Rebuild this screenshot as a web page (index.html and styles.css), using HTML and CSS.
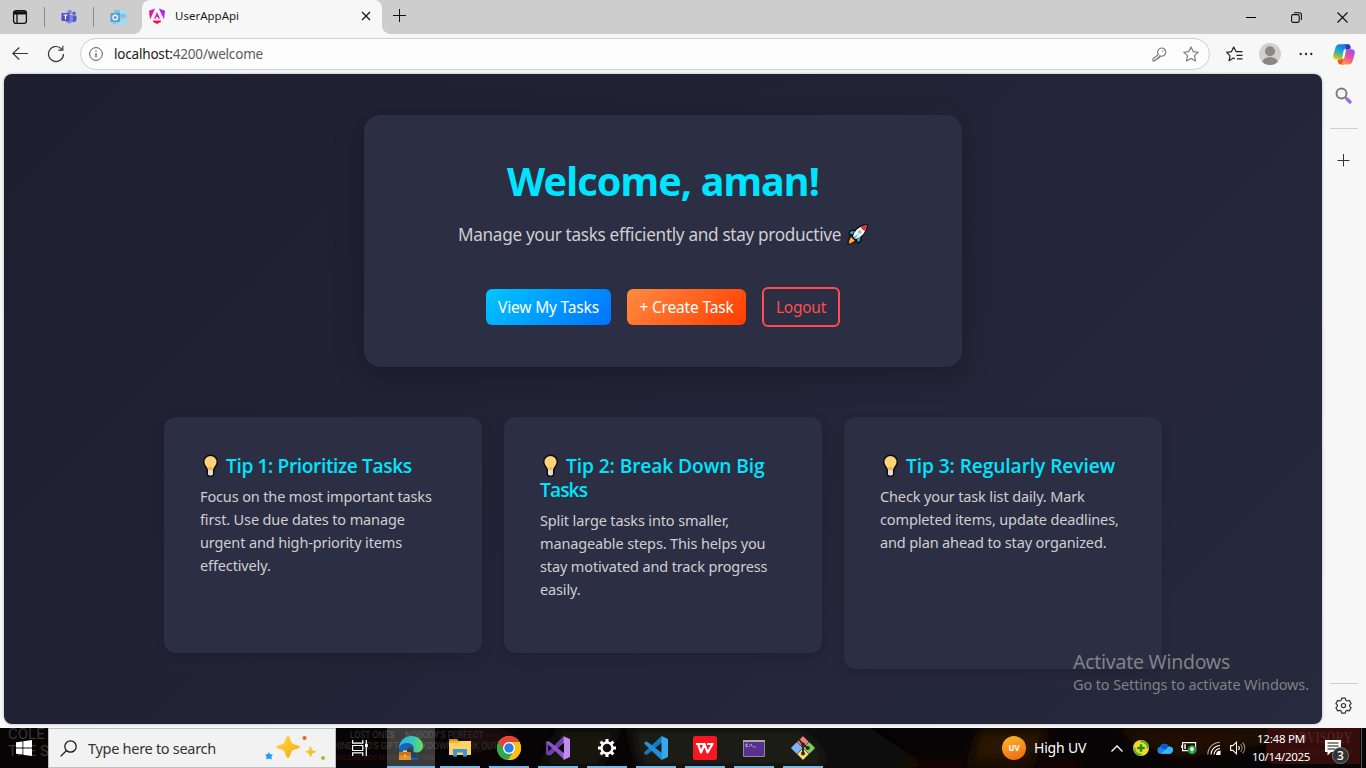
FILE: index.html
```html
<!DOCTYPE html>
<html lang="en">
<head>
<meta charset="utf-8">
<title>UserAppApi</title>
<link rel="stylesheet" href="styles.css">
</head>
<body>
<div class="desktop">
  <header class="tabstrip">
    <div class="tab-cell cell-menu"><svg width="16" height="16" viewBox="0 0 16 16" fill="none" stroke="#111" stroke-width="1.3"><rect x="1.6" y="1.6" width="12.8" height="12.8" rx="2.4"/><path d="M2 3.2h12M2 4.6h12" stroke-width="2"/><path d="M5 5v9"/></svg></div>
    <i class="tab-sep"></i>
    <div class="tab-cell"><svg width="16" height="16" viewBox="0 0 16 16"><circle cx="13" cy="4.3" r="1.8" fill="#5b62c8"/><circle cx="8.6" cy="3" r="2.3" fill="#7b83eb"/><path d="M10 6.500h5.500v4a3 3 0 0 1-4 2.500z" fill="#5059c9"/><path d="M5 6h7v5a4 4 0 0 1-7 2z" fill="#7b83eb"/><rect x=".5" y="4" width="8" height="8" rx=".8" fill="#4b53bc"/><path d="M2.500 6h4M4.500 6v4.500" stroke="#fff" stroke-width="1.200"/></svg></div>
    <i class="tab-sep"></i>
    <div class="tab-cell"><svg width="17" height="17" viewBox="0 0 17 17"><path d="M4 .8h12v8H4z" fill="#7cc4e6"/><path d="M10 .8h6v4h-6z" fill="#a4dcf2"/><path d="M3 8l7 3 6.500-4v9H3z" fill="#84c5e4"/><path d="M3 16l13.500-8v8z" fill="#a3d8f0"/><rect x=".5" y="4" width="9.500" height="9" rx=".7" fill="#5a9fce"/><circle cx="5.200" cy="8.500" r="2.300" fill="none" stroke="#edf6fb" stroke-width="1.400"/></svg></div>
    <div class="tab">
      <svg width="16" height="16" viewBox="0 0 16 16"><defs><linearGradient id="ng" x1="0" x2="1" y1=".7" y2="0"><stop offset="0" stop-color="#f11272"/><stop offset=".55" stop-color="#d622dc"/><stop offset="1" stop-color="#7d2af5"/></linearGradient></defs><path d="M6.200.4L0 2.700l1 8.800zM9.800.4L16 2.700l-1 8.800z" fill="url(#ng)"/><path d="M8 4l3 6.700H9.400L8.800 9H7.200l-.6 1.700H5z" fill="#e21cb4"/><path d="M4.300 12.500h7.400l.5 1.300L8 16l-4.200-2.200z" fill="#f5104e"/></svg>
      <span class="tab-title">UserAppApi</span>
      <svg class="tab-close" width="10" height="10" viewBox="0 0 10 10"><path d="M1 1l8 8M9 1L1 9" stroke="#111" stroke-width="1.200"/></svg>
    </div>
    <svg class="new-tab" width="14" height="14" viewBox="0 0 14 14"><path d="M6.500 0v13M0 6.500h13" stroke="#111"/></svg>
    <div class="win-controls">
      <svg width="10" height="10" viewBox="0 0 10 10"><path d="M0 5.500h10" stroke="#000"/></svg>
      <svg width="11" height="11" viewBox="0 0 11 11" fill="none" stroke="#111" stroke-width="1.100"><rect x=".6" y="2.600" width="7.600" height="7.800" rx="1.500"/><path d="M3 .7h5.200a2.200 2.200 0 0 1 2.200 2.200v5"/></svg>
      <svg width="11" height="11" viewBox="0 0 11 11"><path d="M.5.5l10 10M10.500.5l-10 10" stroke="#111" stroke-width="1.200"/></svg>
    </div>
  </header>

  <nav class="toolbar">
    <svg class="ic-back" width="16" height="14" viewBox="0 0 16 14" fill="none" stroke="#333" stroke-width="1.100"><path d="M7.300.5L.8 6.500l6.500 6M1 6.500h15"/></svg>
    <svg class="ic-reload" width="18" height="18" viewBox="0 0 18 18" fill="none" stroke="#333" stroke-width="1.200"><path d="M16.500 9A7.500 7.500 0 1 1 14.600 4M15.800.8v4.400h-4.400"/></svg>
    <div class="address">
      <svg width="14" height="14" viewBox="0 0 14 14" fill="none" stroke="#555"><circle cx="7" cy="7" r="6.400"/><path d="M7 6.200v4M7 3.600v1.200" stroke-width="1.300"/></svg>
      <span class="url">localhost:<em>4200/welcome</em></span>
      <svg class="ic-key" width="15" height="15" viewBox="0 0 15 15" fill="none" stroke="#777" stroke-width="1.100"><path d="M6.200 7.200A4.100 4.100 0 1 1 8.800 9.100L7.600 8.900v1.500H6v1.500H4.500l-1.800 2H1v-2.100l5.400-4.300z"/><circle cx="10.800" cy="4" r=".7" fill="#777" stroke="none"/></svg>
      <svg width="16" height="16" viewBox="0 0 16 16" fill="none" stroke="#777" stroke-width="1.100" stroke-linejoin="round"><path d="M8 .9l2.200 4.700 5.100.6-3.800 3.500 1 5.200L8 12.400l-4.500 2.500 1-5.200L.7 6.200l5.100-.6z"/></svg>
    </div>
    <svg class="ic-fav" width="17" height="16" viewBox="0 0 17 16" fill="none" stroke="#222" stroke-width="1.200" stroke-linejoin="round"><path d="M8.800 12.800L7.300 12l-4.200 2.700.9-4.900L.7 6.300l4.800-.7L7.700 1 10 5.600h6.500M10.500 9.300h6M11 12.800h5.500"/></svg>
    <svg class="ic-user" width="22" height="22" viewBox="0 0 22 22"><defs><clipPath id="uc"><circle cx="11" cy="11" r="11"/></clipPath></defs><g clip-path="url(#uc)"><path d="M0 0h22v22H0z" fill="#d2d0ce"/><circle cx="11" cy="8.300" r="5" fill="#8a8886"/><ellipse cx="11" cy="20" rx="8" ry="6" fill="#8a8886"/></g></svg>
    <svg class="ic-more" width="14" height="4" viewBox="0 0 14 4" fill="#222"><circle cx="1.700" cy="2" r="1.150"/><circle cx="7" cy="2" r="1.150"/><circle cx="12.300" cy="2" r="1.150"/></svg>
    <svg class="ic-copilot" width="22" height="21" viewBox="0 0 22 21"><defs><linearGradient id="cp1" x1=".6" y1="0" x2=".3" y2="1"><stop offset="0" stop-color="#1677d8"/><stop offset=".4" stop-color="#18a5e5"/><stop offset=".7" stop-color="#6cbf55"/><stop offset="1" stop-color="#f6c51a"/></linearGradient><linearGradient id="cp2" x1=".7" y1="0" x2=".3" y2="1"><stop offset="0" stop-color="#a24df0"/><stop offset=".5" stop-color="#e8509d"/><stop offset="1" stop-color="#ff9a4a"/></linearGradient></defs><path d="M11 .3h4.500c1.500 0 1.900 1.900 2.400 4.200l-5 1.500z" fill="#1c3fc0"/><path d="M11 20.500H7.500c-2 0-2.500-2-3-4.500l5.500-2z" fill="#e8572c"/><path d="M6.500.3h7.300c-2 1.500-3.200 12-4.500 14.200-.5 1-1.500 1-2.800 1H3.300C.5 15.500-.3 13.300.4 10.500L2.500 3.600C3.200 1.500 4.500.3 6.500.3z" fill="url(#cp1)"/><path d="M15.500 20.500H8.200c2-1.500 3.200-12 4.500-14.200.5-1 1.500-1 2.800-1h3.200c2.800 0 3.600 2.200 2.900 5l-2.100 6.900c-.7 2.100-2 3.300-4 3.300z" fill="url(#cp2)"/><path d="M10.800 6h2.300L11.200 14.500H9z" fill="#fff"/></svg>
  </nav>

  <div class="middle">
    <main class="page">
      <section class="hero">
        <h1>Welcome, aman!</h1>
        <p class="lead"><span>Manage your tasks efficiently and stay productive</span>
          <svg class="rocket" width="21" height="21" viewBox="0 0 21 21"><path d="M20.300.6c-5-.1-9 1.800-12 5.200L3.500 6.500 1.300 10l2.300.6L1 17.500l-.3 2.800 3.300-.4 6-2.600.7 2.400 3.400-2 .5-5.200c4-3.300 5.800-7.200 5.700-11.900z" fill="#111" stroke="#111" stroke-width="1"/><path d="M7.600 7L4 7.600 2.600 9.500l3 .8zM13.500 13l-.7 4-2 1-.8-2.900z" fill="#1fb4f0"/><path d="M19.500 1.300c-5 .3-9 3-12 7.200L6 12.300 8.600 15l3.700-1.500c4.300-3 7-7 7.200-12.200z" fill="#fff"/><path d="M19.500 1.300c-2 .1-4 .7-5.600 1.700.5 2 1.800 3.300 3.900 3.900 1-1.700 1.600-3.500 1.700-5.600z" fill="#e32b43"/><circle cx="12.800" cy="8" r="2" fill="#b6b9be"/><path d="M6.500 12.500l2 2L12 10z" fill="#4ec9f5"/><path d="M4 12.800l4 4-3.800 2.400-2.600.4.500-3z" fill="#ff8a1e"/><path d="M4 14l2.500 2.500-3 1.400z" fill="#ffd04a"/></svg></p>
        <div class="actions">
          <button class="btn btn-view">View My Tasks</button>
          <button class="btn btn-create">+ Create Task</button>
          <button class="btn btn-logout">Logout</button>
        </div>
      </section>
      <section class="tips">
        <article class="tip">
          <h2 class="tight"><svg class="bulb"><use href="#bulb"/></svg>Tip 1: Prioritize Tasks</h2>
          <p>Focus on the most important tasks<br>first. Use due dates to manage<br>urgent and high-priority items<br>effectively.</p>
        </article>
        <article class="tip">
          <h2><svg class="bulb"><use href="#bulb"/></svg>Tip 2: Break Down Big<br><span class="tighter">Tasks</span></h2>
          <p>Split large tasks into smaller,<br>manageable steps. This helps you<br>stay motivated and track progress<br>easily.</p>
        </article>
        <article class="tip tip-tall">
          <h2><svg class="bulb"><use href="#bulb"/></svg>Tip 3: Regularly Review</h2>
          <p>Check your task list daily. Mark<br>completed items, update deadlines,<br>and plan ahead to stay organized.</p>
        </article>
      </section>
    </main>
    <aside class="sidebar">
      <svg width="17" height="17" viewBox="0 0 17 17" fill="none"><circle cx="6.500" cy="6.500" r="5" stroke="#7a7a7a" stroke-width="1.900"/><path d="M10 10l2.500 2.500" stroke="#7a7a7a" stroke-width="1.600"/><path d="M12 12l3 3" stroke="#9a6ad8" stroke-width="3.200" stroke-linecap="round"/></svg>
      <hr>
      <svg class="side-plus" width="13" height="13" viewBox="0 0 13 13"><path d="M6.500 0v12.500M.5 6.500H12.500" stroke="#333"/></svg>
      <hr class="hr-bottom">
      <svg class="side-gear" width="17" height="17" viewBox="0 0 17 17" fill="none" stroke="#333" stroke-width="1.200" stroke-linejoin="round"><path d="M6.700 1.200h3.600l.6 2.100 1.200.7 2.200-.6 1.800 3.100-1.500 1.600v1.100l1.500 1.600-1.800 3.100-2.200-.6-1.200.7-.6 2.100H6.700L6.100 14l-1.200-.7-2.200.6L.9 10.800l1.500-1.600V8.100L.9 6.500l1.800-3.100L4.900 4l1.200-.7z"/><circle cx="8.500" cy="8.600" r="2.100"/></svg>
    </aside>
  </div>

  <div class="watermark"><div class="wm-title">Activate Windows</div><div>Go to Settings to activate Windows.</div></div>

  <footer class="taskbar">
    <svg class="wallpaper" width="1366" height="40" viewBox="0 0 1366 40"><defs><filter id="soft"><feGaussianBlur stdDeviation="6"/></filter></defs>
      <path d="M0 0h1366v40H0z" fill="#060404"/>
      <g filter="url(#soft)"><path d="M500 0l30 14-60 12-20-26z" fill="#1d0c08"/><path d="M560 0h60l-20 40h-60z" fill="#19150a"/><path d="M630 0h180l20 40H640z" fill="#1c1a18"/><path d="M800 0h70l60 40h-90z" fill="#100b07"/><path d="M980 2h70l-20 30h-60z" fill="#2a1305"/><path d="M1115 0h160l-10 16-80 14-50-14z" fill="#241003"/><path d="M900 34h180v6H900z" fill="#260903"/></g>
      <path d="M1267 0h93v36h-84q-10 0-10-10z" fill="#340c0b"/>
      <g class="wall-text"><text x="8" y="11" class="wt-big">COLE</text><text x="8" y="28" class="wt-big">THE S</text><text x="350" y="10">LOST ONES</text><text x="405" y="10">NOBODY'S PERFECT</text><text x="333" y="21">HINE GOD'S GIFT BREAKDOWN WORK OUT</text><text x="334" y="32" class="wt-red">DUCERS: ROC NATION AND THE</text><text x="1290" y="15" class="wt-adv" textLength="62" lengthAdjust="spacingAndGlyphs">ADVISORY</text><text x="1290" y="27" class="wt-adv2" textLength="62" lengthAdjust="spacingAndGlyphs">EXPLICIT CONTENT</text></g></svg>
    <div class="start"><svg width="16" height="16" viewBox="0 0 16 16" fill="#fff"><path d="M0 2.300l6.500-.9v6.200H0zM7.300 1.300L16 0v7.600H7.300zM0 8.400h6.500v6.200L0 13.700zM7.300 8.400H16V16l-8.700-1.300z"/></svg></div>
    <div class="search">
      <svg width="17" height="17" viewBox="0 0 17 17" fill="none" stroke="#111" stroke-width="1.200"><circle cx="10.500" cy="6.500" r="5.700"/><path d="M6.500 10.500L.6 16.400"/></svg>
      <span class="search-text">Type here to search</span>
      <svg class="sparkles" width="62" height="26" viewBox="0 0 62 26"><defs><linearGradient id="sp" x1="0" y1="0" x2="1" y2="1"><stop offset="0" stop-color="#ffd84a"/><stop offset="1" stop-color="#f5a80c"/></linearGradient></defs><path d="M24 1c2.200 0 2.500 6 4.500 7.500s7.500 2 7.500 3.500-5.500 2-7.500 3.500-2.300 7.500-4.500 7.500-2.500-6-4.500-7.500S12 13.500 12 12s5.500-2 7.500-3.500S21.800 1 24 1z" fill="url(#sp)"/><path d="M46.500 11c1 0 1 3.500 2 4.200s3.500.6 3.500 1.500-2.500.9-3.500 1.600-1 3.700-2 3.700-1-3-2-3.700-3.500-.7-3.500-1.600 2.500-.8 3.500-1.500 1-4.200 2-4.200z" fill="url(#sp)"/><path d="M4.800 17l1.300 2.300 2.900.2-1.700 2.200.6 2.800-3-1.100-2.700 1 .3-2.800L1 19.500l2.600-.3z" fill="#1a9ff0"/><circle cx="40.500" cy="3" r="2.100" fill="#f2602c"/><circle cx="59" cy="23" r="2.100" fill="#8fcb3c"/></svg>
    </div>
    <div class="task-view"><svg width="17" height="16" viewBox="0 0 17 16" fill="none" stroke="#fff" stroke-width="1.200"><path d="M.6 0v3.200h10.200V0M.6 16v-3.200h10.200V16M.6 5.500h10.200v5H.6zM14.300 0v4M14.300 7v9"/><path d="M13 4h2.800v3H13z" fill="#fff" stroke="none"/></svg></div>
    <div class="apps">
      <div class="app active"><svg width="24" height="24" viewBox="0 0 24 24"><defs><linearGradient id="e1" x1="0" y1=".3" x2="1" y2=".3"><stop offset="0" stop-color="#2fb0ee"/><stop offset=".6" stop-color="#35c7b4"/><stop offset="1" stop-color="#6be05a"/></linearGradient></defs><path d="M0 11C1 4 6 0 12.500 0 19 0 24 4.500 24 10c0 4-3 6.500-6.500 6.500-3 0-4-1.500-3-3 1-3-1-5.500-5-5.500C5 8 1 9 0 14z" fill="url(#e1)"/><path d="M0 13c.5-4 4.500-6.500 9-6 3 .3 5 2.500 5 4.500-3-1.500-6 .5-6 4 0 4 3.500 6.500 8 6.500 2 0 4-.6 5.500-1.500-2 2.500-5 3.500-9 3.500C5 24 0 19 0 13z" fill="#1464b8"/><path d="M8 15c0 4.500 4 7 8.500 7 2 0 4-.5 5.500-2-3 1-8 .5-10-3.500z" fill="#0b4690"/><path d="M0 16h12v8H0z" fill="#e5962a"/><path d="M0 16h12v3.500H0z" fill="#c77413"/><path d="M4 16v-1.500h4V16M5.200 18.500h1.600v2.300H5.200z" fill="#ffd273"/></svg></div>
      <div class="app"><svg width="22" height="20" viewBox="0 0 22 20"><path d="M0 1h8l2 2H0z" fill="#d9910c"/><path d="M0 3h22v14H0z" fill="#fcd364"/><path d="M0 3h11v2H0z" fill="#f2b92e"/><path d="M4 18.500V11h14v7.500h-4V14.500H8v4z" fill="#3f96d8"/></svg></div>
      <div class="app"><svg width="24" height="24" viewBox="0 0 24 24"><circle cx="12" cy="12" r="12" fill="#fbc116"/><path d="M12 12L1.600 6A12 12 0 0 0 11 24l6-9z" fill="#2da94f"/><path d="M1.600 6A12 12 0 0 1 22.400 6H12l-4.500 9z" fill="#e94235"/><path d="M12 6h10.400A12 12 0 0 1 11 24l6.500-9z" fill="#fbc116"/><circle cx="12" cy="12" r="6" fill="#fff"/><circle cx="12" cy="12" r="4.700" fill="#2b7de9"/></svg></div>
      <div class="app"><svg width="24" height="24" viewBox="0 0 24 24"><path d="M0 6l2.500-1L8 9.800 17.500.3 18 7 5 19 2 19.500 0 18z" fill="#6f3eb0"/><path d="M2.500 9v6.500L6 12z" fill="#080606"/><path d="M2.500 5L18 17v6.500L0 6.200z" fill="#8a58c8"/><path d="M17.500.2L24 3v18l-6.500 3z" fill="#c08cf2"/><path d="M18 7v10l-6-5z" fill="#080606"/><path d="M2.500 9.500v5L5 12z" fill="#080606"/></svg></div>
      <div class="app"><svg width="20" height="20" viewBox="0 0 20 20" fill="none" stroke="#fff"><circle cx="10" cy="10" r="5.500" stroke-width="2.400"/><g stroke-width="3"><path d="M10 1v3M10 16v3M1 10h3M16 10h3M3.600 3.600l2.200 2.200M14.200 14.200l2.200 2.200M16.400 3.600l-2.200 2.200M5.800 14.200l-2.200 2.200"/></g></svg></div>
      <div class="app"><svg width="24" height="24" viewBox="0 0 24 24"><path d="M0 16.500L17.500 0l1 6L3 18.800 1 18.300z" fill="#1678c0"/><path d="M0 7.500l1.500-1.800L3 5.500 18 17l-.5 7z" fill="#218fd8"/><path d="M17.500 0L24 3v18l-6.500 3z" fill="#35a8f2"/></svg></div>
      <div class="app"><svg width="24" height="24" viewBox="0 0 24 24"><rect width="24" height="24" rx="2.500" fill="#fb1522"/><path d="M3 8h8M5 8l3 8.500L11.500 8l3 8.500L19.500 8H14" fill="none" stroke="#fff" stroke-width="2.200" stroke-linejoin="round"/></svg></div>
      <div class="app"><svg width="22" height="17" viewBox="0 0 22 17"><path d="M.5.500h21v16H.5z" fill="#59308f" stroke="#8d8a92"/><path d="M0 0h22v2H0z" fill="#aaa"/><path d="M4.800 4.200H3v2.300h1.800M6.500 4.500v.8M6.500 6v.8M8 4l1.300 2.700M10.500 7h2" stroke="#ddd" stroke-width=".8" fill="none"/></svg></div>
      <div class="app"><svg width="24" height="24" viewBox="0 0 24 24"><g stroke-width="1.200" stroke-linejoin="round"><path d="M12 .8l5 5-5 5-5-5z" fill="#f27c7c" stroke="#f27c7c"/><path d="M5.800 7l5 5-5 5-5-5z" fill="#7fb3f5" stroke="#7fb3f5"/><path d="M18.200 7l5 5-5 5-5-5z" fill="#82cc62" stroke="#82cc62"/><path d="M12 13.200l5 5-5 5-5-5z" fill="#fbdd74" stroke="#fbdd74"/></g><path d="M8 3.500l4 5v9M12 8.500l4.500 3.500" stroke="#2b2622" stroke-width="1.800" fill="none"/><g fill="#2b2622"><circle cx="12" cy="8.500" r="2"/><circle cx="16.800" cy="12" r="2"/><circle cx="12" cy="17.500" r="2"/></g></svg></div>
    </div>
    <div class="tray">
      <i class="uv">UV</i>
      <span class="weather">High UV</span>
      <svg class="chev" width="12" height="7" viewBox="0 0 12 7" fill="none" stroke="#fff" stroke-width="1.300"><path d="M.5 6.500L6 1l5.500 5.500"/></svg>
      <svg class="t-icon" width="16" height="16" viewBox="0 0 16 16"><circle cx="8" cy="8" r="8" fill="#f5d524"/><path d="M8 0a8 8 0 0 1 8 8l-3 1L7 3zM0 8a8 8 0 0 0 8 8l1-3-6-6z" fill="#4fb32c"/><circle cx="8" cy="8" r="5.800" fill="#f2dc28"/><path d="M8 4.300v7.400M4.300 8h7.400" stroke="#258a24" stroke-width="2.400"/></svg>
      <svg class="t-icon" width="16" height="11" viewBox="0 0 16 11"><path d="M3.500 10.800A3.500 3.500 0 0 1 2.800 4 5 5 0 0 1 12 3.500a3.700 3.700 0 0 1 .5 7.300z" fill="#1687e8"/><path d="M3 4A5 5 0 0 1 12 3.500L8 7z" fill="#0a5cc0"/><path d="M3.500 10.800L10 5.500a3 3 0 0 1 5.800 2.700 3.500 3.500 0 0 1-3.300 2.600z" fill="#37b6fa"/></svg>
      <svg class="t-icon t-battery" width="16" height="14" viewBox="0 0 16 14"><path d="M1.600 1.600h13v8h-13zM.8 4v3" fill="none" stroke="#fff" stroke-width="1.100"/><path d="M3.300 3.300h1.500v4.700H3.300z" fill="#fff"/><circle cx="11" cy="8.800" r="4.500" fill="#1b9a3c"/><path d="M11 6c1.800 1 2 2 1.200 3.400H9.800C9 8 9.200 7 11 6zM11 9v2.800" fill="#fff" stroke="#fff" stroke-width=".7"/></svg>
      <svg class="t-icon t-wifi" width="14" height="14" viewBox="0 0 14 14" fill="none" stroke="#fff" stroke-width="1.100"><path d="M.8 13.500A12.500 12.500 0 0 1 13 1.200" opacity=".65"/><path d="M4 13.500a9.200 9.200 0 0 1 9-9M7 13.500a6.200 6.200 0 0 1 6-6"/><path d="M9.700 13.500a3.500 3.500 0 0 1 3.300-3.300v3.300z" fill="#fff"/></svg>
      <svg class="t-icon t-sound" width="16" height="14" viewBox="0 0 16 14" fill="none" stroke="#fff" stroke-width="1.100"><path d="M.6 4.600h2.200L6.500 1.200v11.600L2.800 9.400H.6z"/><path d="M8.500 5a3 3 0 0 1 0 4"/><path d="M10.500 3.200a5.300 5.300 0 0 1 0 7.600M12.600 1.500a8 8 0 0 1 0 11" opacity=".5"/></svg>
      <div class="clock"><div class="time">12:48 PM</div><div class="date">10/14/2025</div></div>
      <div class="notif"><svg width="26" height="26" viewBox="0 0 26 26"><path d="M1 2h16v12H7l-3.500 3.500V14H1z" fill="#fff"/><path d="M3.500 5h11M3.500 8h11M3.500 11h8" stroke="#111" stroke-width="1.100"/><circle cx="16.500" cy="17.500" r="8" fill="#333" stroke="#777"/><text x="16.500" y="22" text-anchor="middle" class="notif-n">3</text></svg></div>
      <i class="show-desktop"></i>
    </div>
  </footer>
</div>
<svg width="0" height="0" class="defs"><symbol id="bulb" viewBox="0 0 18 24"><path d="M8.500 1.200a6.800 6.800 0 0 1 6.800 7c0 3.200-3.100 5-3.600 7.800v3.500c0 1.700-1.400 2.700-3.200 2.700s-3.200-1-3.200-2.700V16c-.5-2.800-3.600-4.600-3.600-7.800a6.800 6.800 0 0 1 6.800-7z" fill="#ffd37c" stroke="#0b0b0f" stroke-width="1.500"/><path d="M6.200 12.500l1.200 1 1.100-1 1.100 1 1.200-1-.5 3.500H6.700z" fill="#fbb934"/><path d="M6.100 16.300h4.800v3.400c0 1-1 1.700-2.400 1.700s-2.400-.7-2.400-1.700z" fill="#d9dbe0"/></symbol></svg>
</body>
</html>
```
FILE: styles.css
```css
* { box-sizing: border-box; }
body { margin: 0; font-family: "Noto Sans", "Open Sans", sans-serif; }
svg { display: block; flex: none; }
h1, h2, p { margin: 0; }
.defs { position: absolute; }
.desktop { width: 1366px; height: 768px; display: flex; flex-direction: column; overflow: hidden; position: relative; background: #f7f7f7; }

/* Browser tab strip */
.tabstrip { height: 34px; background: #cdcdcd; display: flex; align-items: center; flex: none; }
.tab-cell { width: 48px; height: 32px; display: flex; align-items: center; justify-content: center; }
.cell-menu { width: 44px; padding-right: 4px; }
.tab-sep { width: 1px; height: 20px; background: #8d8d8d; }
.tab { width: 240px; height: 34px; background: #f7f7f7; border-radius: 8px 8px 0 0; display: flex; align-items: center; padding: 0 11px 2px 7px; position: relative; }
.tab::before, .tab::after { content: ""; position: absolute; bottom: 0; width: 8px; height: 8px; }
.tab::before { left: -8px; background: radial-gradient(circle at 0 0, transparent 7.5px, #f7f7f7 8px); }
.tab::after { right: -8px; background: radial-gradient(circle at 100% 0, transparent 7.5px, #f7f7f7 8px); }
.tab-title { font-size: 11.5px; line-height: 16px; margin-left: 10px; color: #1b1b1b; white-space: nowrap; }
.tab-close { margin-left: auto; }
.new-tab { margin: 0 0 2px 11px; }
.win-controls { margin: 0 18px 0 auto; display: flex; align-items: center; gap: 35px; }

/* Address row */
.toolbar { height: 40px; flex: none; display: flex; align-items: center; background: #f7f7f7; }
.ic-back { margin-left: 12px; }
.ic-reload { margin-left: 19px; }
.address { margin-left: 15px; width: 1130px; height: 32px; border: 1px solid #cfcfcf; border-radius: 16px; background: #fdfdfd; display: flex; align-items: center; padding: 0 10px 0 8px; }
.url { font-size: 13.5px; line-height: 18px; letter-spacing: -.19px; margin-left: 11px; color: #1a1a1a; white-space: nowrap; }
.url em { font-style: normal; color: #5c5c5c; }
.ic-key { margin-left: auto; margin-right: 16px; }
.ic-fav { margin-left: 16px; }
.ic-user { margin-left: 16px; }
.ic-more { margin-left: 18px; }
.ic-copilot { margin-left: 20px; }

.middle { flex: 1; display: flex; min-height: 0; }
.page { width: 1318px; height: 650px; margin-left: 4px; border-radius: 8px; overflow: hidden; background: linear-gradient(135deg, #1e1e2f, #27293d); box-shadow: 0 0 3px rgba(0, 0, 0, .3); padding-top: 41px; display: flex; flex-direction: column; align-items: center; }

/* Welcome panel */
.hero { width: 598px; height: 252px; background: #2c2e43; border-radius: 16px; box-shadow: 0 8px 30px rgba(0, 0, 0, .25); padding-top: 41px; display: flex; flex-direction: column; align-items: center; }
.hero h1 { font-size: 39.5px; line-height: 50px; font-weight: 700; letter-spacing: -.87px; color: #00e5ff; white-space: nowrap; }
.lead { font-size: 17.2px; line-height: 26px; letter-spacing: -.33px; margin-top: 16px; color: #cfcfd4; display: flex; align-items: center; white-space: nowrap; }
.rocket { margin: 0 0 2px 6px; }
.actions { display: flex; gap: 16px; align-items: center; margin-top: 39px; }
.btn { border: 0; border-radius: 6px; height: 36px; padding: 0; font-family: inherit; font-size: 15.5px; line-height: 24px; letter-spacing: -.17px; color: #fff; white-space: nowrap; }
.btn-view { width: 125px; background: linear-gradient(135deg, #00c6ff, #0072ff); }
.btn-create { width: 119px; background: linear-gradient(135deg, #ff8c42, #ff3c00); }
.btn-logout { width: 78px; height: 40px; border: 2px solid #ff4d4f; background: transparent; color: #ff4d4f; letter-spacing: -.26px; }

/* Tip cards */
.tips { display: flex; gap: 22px; margin-top: 50px; align-items: flex-start; }
.tip { width: 318px; height: 236px; background: #2c2e43; border-radius: 12px; box-shadow: 0 4px 12px rgba(0, 0, 0, .13); padding: 37px 0 0 36px; }
.tip-tall { height: 252px; }
.tip h2 { font-family: "Open Sans", "Noto Sans", sans-serif; font-size: 19.2px; line-height: 24px; font-weight: 600; letter-spacing: -.1px; color: #00e5ff; white-space: nowrap; margin-bottom: 7px; }
.tip .tight { letter-spacing: -.4px; }
.tighter { letter-spacing: -.9px; }
.bulb { display: inline-block; width: 18px; height: 24px; margin: 0 6px 0 2px; vertical-align: top; }
.tip p { font-size: 14.5px; line-height: 23px; letter-spacing: -.133px; color: #cfcfd2; white-space: nowrap; }

/* Edge sidebar */
.sidebar { width: 43px; display: flex; flex-direction: column; align-items: center; padding: 13px 0 14px; }
.sidebar hr { width: 28px; height: 1px; border: 0; background: #cfcfcf; margin: 24px 0 25px; flex: none; }
.sidebar .hr-bottom { margin: auto 0 13px; }

.watermark { position: absolute; left: 1073px; top: 650px; color: rgba(160, 160, 160, .75); font-size: 14.5px; line-height: 22px; letter-spacing: -.12px; white-space: nowrap; }
.wm-title { font-size: 19.5px; line-height: 24px; letter-spacing: -.26px; margin-bottom: -1px; }

/* Windows taskbar */
.taskbar { height: 40px; flex: none; display: flex; position: relative; background: #060404; color: #fff; }
.wallpaper { position: absolute; left: 0; top: 0; }
.wall-text { font-family: "Roboto", sans-serif; font-size: 8.6px; fill: #34302f; }
.wt-big { font-size: 15px; fill: #3a3636; }
.wt-red { fill: #38110e; font-size: 7px; }
.wt-adv { font-family: "Liberation Serif", serif; font-weight: 700; font-size: 17px; fill: #4e201e; }
.wt-adv2 { font-size: 8px; fill: #471b1a; }
.taskbar > div { position: relative; }
.start { width: 48px; display: flex; align-items: center; justify-content: center; }
.search { width: 288px; background: #f2f2f2; border: 1px solid #bdbdbd; display: flex; align-items: center; padding-left: 11px; }
.search-text { font-size: 14.5px; line-height: 20px; letter-spacing: -.29px; color: #333; margin-left: 11px; white-space: nowrap; }
.sparkles { margin-left: auto; margin-right: 9px; }
.task-view { width: 48px; display: flex; align-items: center; justify-content: center; }
.apps { display: flex; gap: 1px; margin-left: 3px; }
.app { width: 48px; height: 40px; display: flex; align-items: center; justify-content: center; background: linear-gradient(#76b9ed, #76b9ed) center bottom / 40px 2px no-repeat; }
.app.active { background: linear-gradient(#76b9ed, #76b9ed) center bottom / 48px 2px no-repeat, rgba(255, 255, 255, .22); }
.tray { margin-left: auto; display: flex; align-items: center; }
.uv { width: 24px; height: 24px; border-radius: 50%; background: linear-gradient(160deg, #fbb92b, #f0650f); font: 700 8px/24px "Open Sans", sans-serif; text-align: center; }
.weather { font-size: 14px; line-height: 20px; letter-spacing: -.2px; margin-left: 8px; width: 52px; white-space: nowrap; }
.chev { margin: 0 10px 0 25px; }
.t-icon { margin-right: 8px; }
.t-battery { margin-right: 10px; }
.t-wifi { margin-right: 9px; }
.t-sound { margin-right: -1px; }
.clock { width: 72px; text-align: center; font-size: 11.5px; line-height: 18px; white-space: nowrap; }
.time { letter-spacing: -.22px; }
.date { letter-spacing: -.32px; }
.notif { padding: 6px 0 0 7px; }
.notif-n { font: 600 12px "Open Sans", sans-serif; fill: #fff; }
.show-desktop { width: 1px; height: 40px; background: #555; margin: 0 4px 0 11px; }
```
